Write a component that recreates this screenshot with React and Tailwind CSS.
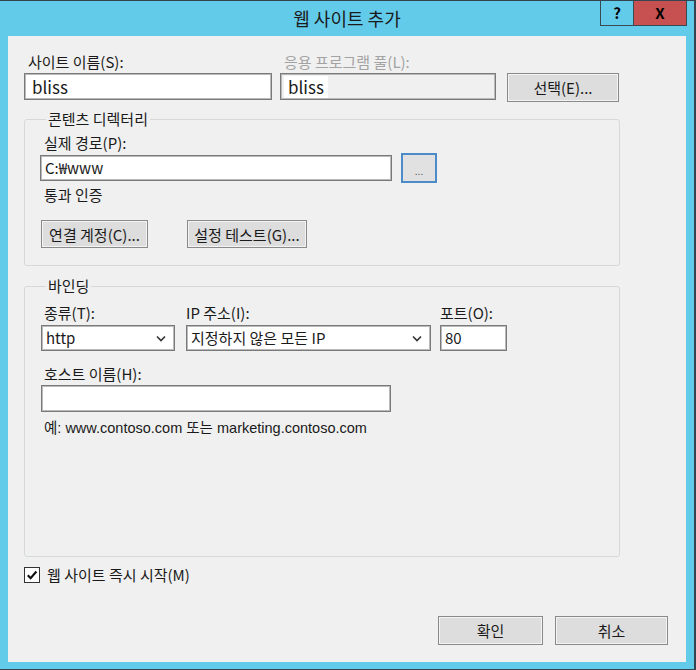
import React from 'react'

// 입력 상자 공통 스타일
const inputCls =
  'bg-white border border-[#7a7a7a] shadow-[inset_0_0_0_1px_#b9b9b9] flex items-center'
const btnCls =
  'bg-[#dddddd] border border-[#8a8a8a] shadow-[inset_0_0_0_1px_#f3f3f3] flex items-center justify-center leading-none'

function Chevron() {
  return (
    <svg width="10" height="7" viewBox="0 0 10 7" className="shrink-0">
      <polyline points="1,1.5 5,5.5 9,1.5" fill="none" stroke="#333" strokeWidth="1.6" />
    </svg>
  )
}

function Select({ width, value }) {
  return (
    <div className={`${inputCls} h-[26px] pl-[4px] pr-[8px] justify-between`} style={{ width }}>
      <span className="text-[15px]">{value}</span>
      <Chevron />
    </div>
  )
}

export default function App() {
  return (
    <div className="w-[696px] h-[670px] bg-[#63cbea] border-t border-r-2 border-b border-[#34454f] flex flex-col font-['Noto_Sans_CJK_KR','Noto_Sans',sans-serif] text-[15px] text-[#1a1a1a]">
      {/* 제목 표시줄 */}
      <div className="h-[35px] shrink-0 grid grid-cols-[1fr_auto_1fr] items-start">
        <div />
        <div className="pt-[3px] text-[18px] leading-[28px] text-[#1b1b1b]">웹 사이트 추가</div>
        <div className="flex justify-end pr-[7px]">
          <div className="w-[34px] h-[25px] border border-t-0 border-[#3a4a52] flex items-center justify-center font-bold text-[15px] text-black">
            ?
          </div>
          <div className="w-[53px] h-[25px] bg-[#c75050] border border-t-0 border-l-0 border-[#3a4a52] flex items-center justify-center font-bold text-[15px] text-black">
            X
          </div>
        </div>
      </div>

      {/* 본문 */}
      <div className="mx-[8px] h-[626px] shrink-0 bg-[#f0f0f0] pl-[16px] pt-[17px] flex flex-col">
        <div className="flex h-[18px] leading-[18px]">
          <div className="w-[256px] pl-[4px]">사이트 이름(S):</div>
          <div className="pl-[4px] text-[#a3a3a3]">응용 프로그램 풀(L):</div>
        </div>
        <div className="mt-[2px] flex items-start">
          <div className={`${inputCls} w-[248px] h-[27px] pl-[7px]`}>
            <span className="text-[17px]">bliss</span>
          </div>
          <div className="ml-[8px] w-[216px] h-[27px] bg-[#f0f0f0] border border-[#7a7a7a] shadow-[inset_0_0_0_1px_#b9b9b9] flex items-center pl-[3px]">
            <span className="bg-white text-[17px] px-[4px] leading-[22px]">bliss</span>
          </div>
          <button className={`${btnCls} ml-[11px] w-[112px] h-[29px]`}>선택(E)...</button>
        </div>

        {/* 콘텐츠 디렉터리 */}
        <fieldset className="mt-[8px] w-[596px] border border-[#d5d9dc] rounded-[3px] px-[15px] pt-[6px] pb-[17px]">
          <legend className="ml-[6px] px-[2px] leading-[18px]">콘텐츠 디렉터리</legend>
          <div className="pl-[4px] h-[18px] leading-[18px]">실제 경로(P):</div>
          <div className="mt-[1px] flex items-center">
            <div className={`${inputCls} w-[352px] h-[26px] pl-[4px]`}>C:₩www</div>
            <button className="ml-[9px] w-[36px] h-[30px] bg-[#e1e1e1] border-2 border-[#4a8bc8] flex items-end justify-center pb-[5px] text-[10px] leading-none text-[#555]">
              ...
            </button>
          </div>
          <div className="mt-[3px] pl-[4px] h-[18px] leading-[18px]">통과 인증</div>
          <div className="mt-[16px] flex gap-[39px] pl-[1px]">
            <button className={`${btnCls} w-[107px] h-[28px]`}>연결 계정(C)...</button>
            <button className={`${btnCls} w-[120px] h-[28px]`}>설정 테스트(G)...</button>
          </div>
        </fieldset>

        {/* 바인딩 */}
        <fieldset className="mt-[11px] w-[596px] h-[280px] border border-[#d5d9dc] rounded-[3px] px-[15px] pt-[9px]">
          <legend className="ml-[6px] px-[2px] leading-[18px]">바인딩</legend>
          <div className="flex pl-[1px]">
            <div className="flex flex-col">
              <div className="pl-[3px] h-[18px] leading-[18px]">종류(T):</div>
              <div className="mt-[3px]">
                <Select width={134} value="http" />
              </div>
            </div>
            <div className="ml-[11px] flex flex-col">
              <div className="h-[18px] leading-[18px]">IP 주소(I):</div>
              <div className="mt-[3px]">
                <Select width={245} value="지정하지 않은 모든 IP" />
              </div>
            </div>
            <div className="ml-[9px] flex flex-col">
              <div className="h-[18px] leading-[18px]">포트(O):</div>
              <div className={`${inputCls} mt-[3px] w-[67px] h-[26px] pl-[4px] text-[15px]`}>80</div>
            </div>
          </div>
          <div className="mt-[14px] pl-[4px] h-[18px] leading-[18px]">호스트 이름(H):</div>
          <div className={`${inputCls} mt-[2px] ml-[1px] w-[350px] h-[27px]`} />
          <div className="mt-[7px] pl-[4px] h-[18px] leading-[18px] font-['Liberation_Sans','Noto_Sans_CJK_KR',sans-serif] text-[14.5px]">
            예: www.contoso.com 또는 marketing.contoso.com
          </div>
        </fieldset>

        {/* 즉시 시작 */}
        <div className="mt-[9px] flex items-center">
          <div className="w-[16px] h-[16px] bg-white border border-[#333] flex items-center justify-center">
            <svg width="12" height="12" viewBox="0 0 12 12">
              <path d="M1.8 6.3 L4.6 9.2 L10.4 2.6" fill="none" stroke="#111" strokeWidth="2.2" />
            </svg>
          </div>
          <span className="ml-[7px] leading-[18px]">웹 사이트 즉시 시작(M)</span>
        </div>

        <div className="mt-[32px] flex justify-end pr-[18px] gap-[12px]">
          <button className={`${btnCls} w-[105px] h-[29px]`}>확인</button>
          <button className={`${btnCls} w-[113px] h-[29px]`}>취소</button>
        </div>
      </div>
    </div>
  )
}
